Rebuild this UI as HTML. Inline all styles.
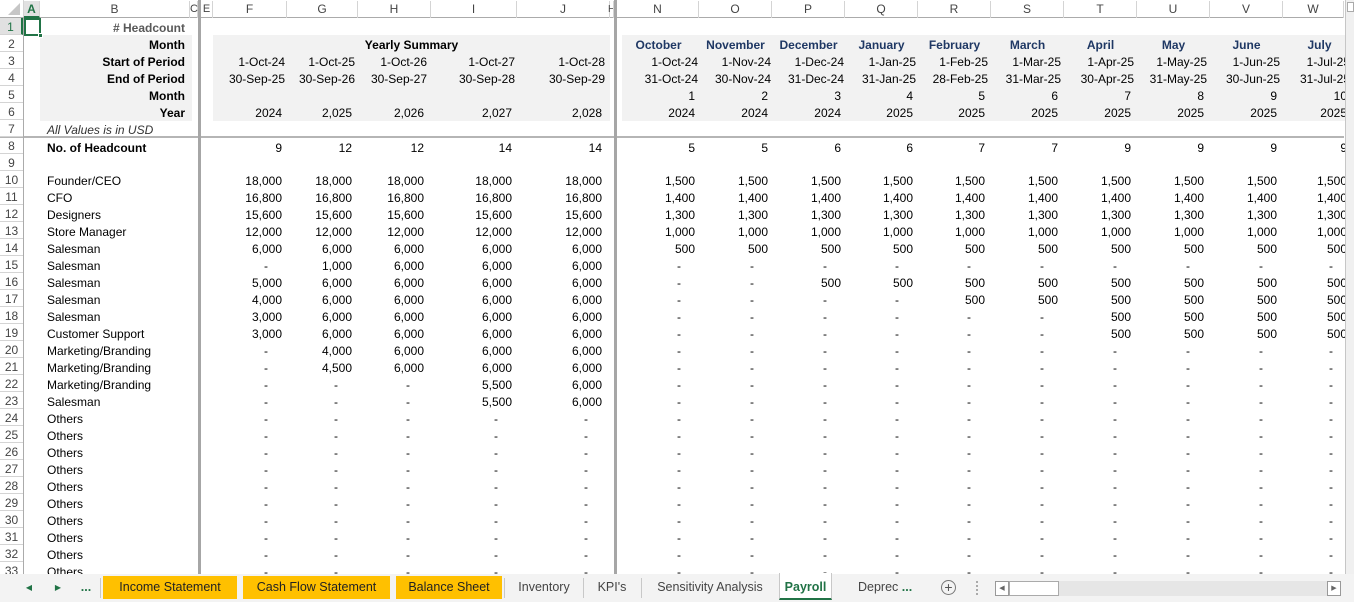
<!DOCTYPE html>
<html><head><meta charset="utf-8"><style>
*{margin:0;padding:0;box-sizing:border-box}
body{width:1354px;height:602px;overflow:hidden;background:#fff;font-family:"Liberation Sans",Arial,sans-serif;font-size:12px;color:#000;position:relative}
.hdr{position:absolute;top:0;left:0;width:1344px;height:18px;border-bottom:1px solid #ababab;background:#fff}
.hdr span{position:absolute;top:1px;height:17px;line-height:17px;text-align:center;color:#444;border-right:1px solid #d4d4d4;font-size:12px}
.rh{position:absolute;left:0;top:18px;width:24px;height:556px;border-right:1px solid #ababab}
.rh span{position:absolute;left:0;width:23px;height:17px;line-height:19px;text-align:center;color:#444;border-bottom:1px solid #d4d4d4;font-size:12px}
#g{position:absolute;left:0;top:0;width:1345px;height:574px;overflow:hidden}
.fill{position:absolute;background:#f2f2f2}
.r{position:absolute;left:0;width:1400px;height:17px}
.r span{position:absolute;top:2px;height:17px;line-height:17px;white-space:nowrap;text-align:right}
.b{left:40px;width:150px;text-align:left!important;padding-left:7px}
.bl{left:40px;width:145px;font-weight:bold;text-align:right!important;color:#000}
.F{left:150px;width:132px}.G{left:287px;width:65px}.H{left:358px;width:66px}.I{left:431px;width:81px}.J{left:517px;width:85px}
.N{left:618px;width:77px}.O{left:699px;width:69px}.P{left:772px;width:69px}.Q{left:845px;width:68px}.R{left:918px;width:67px}.S{left:991px;width:67px}.T{left:1064px;width:67px}.U{left:1137px;width:67px}.V{left:1210px;width:67px}.W{left:1283px;width:64px}
.r span.d{padding-right:14px}
.dt span{transform:translateX(3px)}
.mo span{text-align:center;font-weight:bold;color:#1f3864}
.vl{position:absolute;top:0;width:3px;height:574px;background:#a6a6a6}
.tabs{position:absolute;left:0;top:574px;width:1354px;height:28px;background:#f3f3f3}
.tab{position:absolute;top:2px;height:23px;line-height:23px;text-align:center;font-size:12.5px;color:#444}
.y{background:#ffc000;color:#222}
.sep{position:absolute;top:4px;width:1px;height:20px;background:#c8c8c8}
</style></head><body>
<div id="g">
<div class="fill" style="left:40px;top:35px;width:152px;height:86px"></div>
<div class="fill" style="left:213px;top:35px;width:397px;height:86px"></div>
<div class="fill" style="left:622px;top:35px;width:730px;height:86px"></div>
<div style="position:absolute;left:0;top:136px;width:1344px;height:2px;background:#b5b5b5"></div>

<div class="r" style="top:18px"><span class="bl" style="color:#595959">#&nbsp;Headcount</span></div>
<div class="r mo" style="top:35px"><span class="bl" style="color:#000">Month</span><span style="left:213px;width:397px;color:#000">Yearly Summary</span>
<span style="left:618px;width:81px">October</span><span style="left:699px;width:73px">November</span><span style="left:772px;width:73px">December</span><span style="left:845px;width:73px">January</span><span style="left:918px;width:73px">February</span><span style="left:991px;width:73px">March</span><span style="left:1064px;width:73px">April</span><span style="left:1137px;width:73px">May</span><span style="left:1210px;width:73px">June</span><span style="left:1283px;width:73px">July</span></div>
<div class="r dt" style="top:52px"><span class="bl" style="transform:none">Start of Period</span><span class="F">1-Oct-24</span><span class="G">1-Oct-25</span><span class="H">1-Oct-26</span><span class="I">1-Oct-27</span><span class="J">1-Oct-28</span><span class="N">1-Oct-24</span><span class="O">1-Nov-24</span><span class="P">1-Dec-24</span><span class="Q">1-Jan-25</span><span class="R">1-Feb-25</span><span class="S">1-Mar-25</span><span class="T">1-Apr-25</span><span class="U">1-May-25</span><span class="V">1-Jun-25</span><span class="W">1-Jul-25</span></div>
<div class="r dt" style="top:69px"><span class="bl" style="transform:none">End of Period</span><span class="F">30-Sep-25</span><span class="G">30-Sep-26</span><span class="H">30-Sep-27</span><span class="I">30-Sep-28</span><span class="J">30-Sep-29</span><span class="N">31-Oct-24</span><span class="O">30-Nov-24</span><span class="P">31-Dec-24</span><span class="Q">31-Jan-25</span><span class="R">28-Feb-25</span><span class="S">31-Mar-25</span><span class="T">30-Apr-25</span><span class="U">31-May-25</span><span class="V">30-Jun-25</span><span class="W">31-Jul-25</span></div>
<div class="r" style="top:86px"><span class="bl">Month</span><span class="N">1</span><span class="O">2</span><span class="P">3</span><span class="Q">4</span><span class="R">5</span><span class="S">6</span><span class="T">7</span><span class="U">8</span><span class="V">9</span><span class="W">10</span></div>
<div class="r" style="top:103px"><span class="bl">Year</span><span class="F">2024</span><span class="G">2,025</span><span class="H">2,026</span><span class="I">2,027</span><span class="J">2,028</span><span class="N">2024</span><span class="O">2024</span><span class="P">2024</span><span class="Q">2025</span><span class="R">2025</span><span class="S">2025</span><span class="T">2025</span><span class="U">2025</span><span class="V">2025</span><span class="W">2025</span></div>
<div class="r" style="top:120px"><span class="b" style="font-style:italic;color:#333">All Values is in USD</span></div>
<div class="r" style="top:138px"><span class="b" style="font-weight:bold">No. of Headcount</span><span class="F">9</span><span class="G">12</span><span class="H">12</span><span class="I">14</span><span class="J">14</span><span class="N">5</span><span class="O">5</span><span class="P">6</span><span class="Q">6</span><span class="R">7</span><span class="S">7</span><span class="T">9</span><span class="U">9</span><span class="V">9</span><span class="W">9</span></div>

<div class="r" style="top:171px"><span class="b">Founder/CEO</span><span class="F">18,000</span><span class="G">18,000</span><span class="H">18,000</span><span class="I">18,000</span><span class="J">18,000</span><span class="N">1,500</span><span class="O">1,500</span><span class="P">1,500</span><span class="Q">1,500</span><span class="R">1,500</span><span class="S">1,500</span><span class="T">1,500</span><span class="U">1,500</span><span class="V">1,500</span><span class="W">1,500</span></div>
<div class="r" style="top:188px"><span class="b">CFO</span><span class="F">16,800</span><span class="G">16,800</span><span class="H">16,800</span><span class="I">16,800</span><span class="J">16,800</span><span class="N">1,400</span><span class="O">1,400</span><span class="P">1,400</span><span class="Q">1,400</span><span class="R">1,400</span><span class="S">1,400</span><span class="T">1,400</span><span class="U">1,400</span><span class="V">1,400</span><span class="W">1,400</span></div>
<div class="r" style="top:205px"><span class="b">Designers</span><span class="F">15,600</span><span class="G">15,600</span><span class="H">15,600</span><span class="I">15,600</span><span class="J">15,600</span><span class="N">1,300</span><span class="O">1,300</span><span class="P">1,300</span><span class="Q">1,300</span><span class="R">1,300</span><span class="S">1,300</span><span class="T">1,300</span><span class="U">1,300</span><span class="V">1,300</span><span class="W">1,300</span></div>
<div class="r" style="top:222px"><span class="b">Store Manager</span><span class="F">12,000</span><span class="G">12,000</span><span class="H">12,000</span><span class="I">12,000</span><span class="J">12,000</span><span class="N">1,000</span><span class="O">1,000</span><span class="P">1,000</span><span class="Q">1,000</span><span class="R">1,000</span><span class="S">1,000</span><span class="T">1,000</span><span class="U">1,000</span><span class="V">1,000</span><span class="W">1,000</span></div>
<div class="r" style="top:239px"><span class="b">Salesman</span><span class="F">6,000</span><span class="G">6,000</span><span class="H">6,000</span><span class="I">6,000</span><span class="J">6,000</span><span class="N">500</span><span class="O">500</span><span class="P">500</span><span class="Q">500</span><span class="R">500</span><span class="S">500</span><span class="T">500</span><span class="U">500</span><span class="V">500</span><span class="W">500</span></div>
<div class="r" style="top:256px"><span class="b">Salesman</span><span class="F d">-</span><span class="G">1,000</span><span class="H">6,000</span><span class="I">6,000</span><span class="J">6,000</span><span class="N d">-</span><span class="O d">-</span><span class="P d">-</span><span class="Q d">-</span><span class="R d">-</span><span class="S d">-</span><span class="T d">-</span><span class="U d">-</span><span class="V d">-</span><span class="W d">-</span></div>
<div class="r" style="top:273px"><span class="b">Salesman</span><span class="F">5,000</span><span class="G">6,000</span><span class="H">6,000</span><span class="I">6,000</span><span class="J">6,000</span><span class="N d">-</span><span class="O d">-</span><span class="P">500</span><span class="Q">500</span><span class="R">500</span><span class="S">500</span><span class="T">500</span><span class="U">500</span><span class="V">500</span><span class="W">500</span></div>
<div class="r" style="top:290px"><span class="b">Salesman</span><span class="F">4,000</span><span class="G">6,000</span><span class="H">6,000</span><span class="I">6,000</span><span class="J">6,000</span><span class="N d">-</span><span class="O d">-</span><span class="P d">-</span><span class="Q d">-</span><span class="R">500</span><span class="S">500</span><span class="T">500</span><span class="U">500</span><span class="V">500</span><span class="W">500</span></div>
<div class="r" style="top:307px"><span class="b">Salesman</span><span class="F">3,000</span><span class="G">6,000</span><span class="H">6,000</span><span class="I">6,000</span><span class="J">6,000</span><span class="N d">-</span><span class="O d">-</span><span class="P d">-</span><span class="Q d">-</span><span class="R d">-</span><span class="S d">-</span><span class="T">500</span><span class="U">500</span><span class="V">500</span><span class="W">500</span></div>
<div class="r" style="top:324px"><span class="b">Customer Support</span><span class="F">3,000</span><span class="G">6,000</span><span class="H">6,000</span><span class="I">6,000</span><span class="J">6,000</span><span class="N d">-</span><span class="O d">-</span><span class="P d">-</span><span class="Q d">-</span><span class="R d">-</span><span class="S d">-</span><span class="T">500</span><span class="U">500</span><span class="V">500</span><span class="W">500</span></div>
<div class="r" style="top:341px"><span class="b">Marketing/Branding</span><span class="F d">-</span><span class="G">4,000</span><span class="H">6,000</span><span class="I">6,000</span><span class="J">6,000</span><span class="N d">-</span><span class="O d">-</span><span class="P d">-</span><span class="Q d">-</span><span class="R d">-</span><span class="S d">-</span><span class="T d">-</span><span class="U d">-</span><span class="V d">-</span><span class="W d">-</span></div>
<div class="r" style="top:358px"><span class="b">Marketing/Branding</span><span class="F d">-</span><span class="G">4,500</span><span class="H">6,000</span><span class="I">6,000</span><span class="J">6,000</span><span class="N d">-</span><span class="O d">-</span><span class="P d">-</span><span class="Q d">-</span><span class="R d">-</span><span class="S d">-</span><span class="T d">-</span><span class="U d">-</span><span class="V d">-</span><span class="W d">-</span></div>
<div class="r" style="top:375px"><span class="b">Marketing/Branding</span><span class="F d">-</span><span class="G d">-</span><span class="H d">-</span><span class="I">5,500</span><span class="J">6,000</span><span class="N d">-</span><span class="O d">-</span><span class="P d">-</span><span class="Q d">-</span><span class="R d">-</span><span class="S d">-</span><span class="T d">-</span><span class="U d">-</span><span class="V d">-</span><span class="W d">-</span></div>
<div class="r" style="top:392px"><span class="b">Salesman</span><span class="F d">-</span><span class="G d">-</span><span class="H d">-</span><span class="I">5,500</span><span class="J">6,000</span><span class="N d">-</span><span class="O d">-</span><span class="P d">-</span><span class="Q d">-</span><span class="R d">-</span><span class="S d">-</span><span class="T d">-</span><span class="U d">-</span><span class="V d">-</span><span class="W d">-</span></div>
<div class="r" style="top:409px"><span class="b">Others</span><span class="F d">-</span><span class="G d">-</span><span class="H d">-</span><span class="I d">-</span><span class="J d">-</span><span class="N d">-</span><span class="O d">-</span><span class="P d">-</span><span class="Q d">-</span><span class="R d">-</span><span class="S d">-</span><span class="T d">-</span><span class="U d">-</span><span class="V d">-</span><span class="W d">-</span></div>
<div class="r" style="top:426px"><span class="b">Others</span><span class="F d">-</span><span class="G d">-</span><span class="H d">-</span><span class="I d">-</span><span class="J d">-</span><span class="N d">-</span><span class="O d">-</span><span class="P d">-</span><span class="Q d">-</span><span class="R d">-</span><span class="S d">-</span><span class="T d">-</span><span class="U d">-</span><span class="V d">-</span><span class="W d">-</span></div>
<div class="r" style="top:443px"><span class="b">Others</span><span class="F d">-</span><span class="G d">-</span><span class="H d">-</span><span class="I d">-</span><span class="J d">-</span><span class="N d">-</span><span class="O d">-</span><span class="P d">-</span><span class="Q d">-</span><span class="R d">-</span><span class="S d">-</span><span class="T d">-</span><span class="U d">-</span><span class="V d">-</span><span class="W d">-</span></div>
<div class="r" style="top:460px"><span class="b">Others</span><span class="F d">-</span><span class="G d">-</span><span class="H d">-</span><span class="I d">-</span><span class="J d">-</span><span class="N d">-</span><span class="O d">-</span><span class="P d">-</span><span class="Q d">-</span><span class="R d">-</span><span class="S d">-</span><span class="T d">-</span><span class="U d">-</span><span class="V d">-</span><span class="W d">-</span></div>
<div class="r" style="top:477px"><span class="b">Others</span><span class="F d">-</span><span class="G d">-</span><span class="H d">-</span><span class="I d">-</span><span class="J d">-</span><span class="N d">-</span><span class="O d">-</span><span class="P d">-</span><span class="Q d">-</span><span class="R d">-</span><span class="S d">-</span><span class="T d">-</span><span class="U d">-</span><span class="V d">-</span><span class="W d">-</span></div>
<div class="r" style="top:494px"><span class="b">Others</span><span class="F d">-</span><span class="G d">-</span><span class="H d">-</span><span class="I d">-</span><span class="J d">-</span><span class="N d">-</span><span class="O d">-</span><span class="P d">-</span><span class="Q d">-</span><span class="R d">-</span><span class="S d">-</span><span class="T d">-</span><span class="U d">-</span><span class="V d">-</span><span class="W d">-</span></div>
<div class="r" style="top:511px"><span class="b">Others</span><span class="F d">-</span><span class="G d">-</span><span class="H d">-</span><span class="I d">-</span><span class="J d">-</span><span class="N d">-</span><span class="O d">-</span><span class="P d">-</span><span class="Q d">-</span><span class="R d">-</span><span class="S d">-</span><span class="T d">-</span><span class="U d">-</span><span class="V d">-</span><span class="W d">-</span></div>
<div class="r" style="top:528px"><span class="b">Others</span><span class="F d">-</span><span class="G d">-</span><span class="H d">-</span><span class="I d">-</span><span class="J d">-</span><span class="N d">-</span><span class="O d">-</span><span class="P d">-</span><span class="Q d">-</span><span class="R d">-</span><span class="S d">-</span><span class="T d">-</span><span class="U d">-</span><span class="V d">-</span><span class="W d">-</span></div>
<div class="r" style="top:545px"><span class="b">Others</span><span class="F d">-</span><span class="G d">-</span><span class="H d">-</span><span class="I d">-</span><span class="J d">-</span><span class="N d">-</span><span class="O d">-</span><span class="P d">-</span><span class="Q d">-</span><span class="R d">-</span><span class="S d">-</span><span class="T d">-</span><span class="U d">-</span><span class="V d">-</span><span class="W d">-</span></div>
<div class="r" style="top:562px"><span class="b">Others</span><span class="F d">-</span><span class="G d">-</span><span class="H d">-</span><span class="I d">-</span><span class="J d">-</span><span class="N d">-</span><span class="O d">-</span><span class="P d">-</span><span class="Q d">-</span><span class="R d">-</span><span class="S d">-</span><span class="T d">-</span><span class="U d">-</span><span class="V d">-</span><span class="W d">-</span></div>

<div class="vl" style="left:198px"></div>
<div class="vl" style="left:614px"></div>
</div>

<div class="hdr">
<span style="left:0;width:24px;background:#fff;top:0"><svg width="24" height="17"><polygon points="20,3 20,15 8,15" fill="#c6c6c6"/></svg></span>
<span style="left:24px;width:16px;background:#e1e1e1;color:#217346;font-weight:bold;border-bottom:2px solid #217346">A</span>
<span style="left:40px;width:150px">B</span>
<span style="left:190px;width:8px;font-size:11px">C</span>
<span style="left:201px;width:12px;font-size:11px">E</span>
<span style="left:213px;width:74px">F</span><span style="left:287px;width:71px">G</span><span style="left:358px;width:73px">H</span><span style="left:431px;width:86px">I</span><span style="left:517px;width:93px">J</span>
<span style="left:608px;width:6px;font-size:10px;overflow:hidden">H</span>
<span style="left:617px;width:82px">N</span><span style="left:699px;width:73px">O</span><span style="left:772px;width:73px">P</span><span style="left:845px;width:73px">Q</span><span style="left:918px;width:73px">R</span><span style="left:991px;width:73px">S</span><span style="left:1064px;width:73px">T</span><span style="left:1137px;width:73px">U</span><span style="left:1210px;width:73px">V</span><span style="left:1283px;width:61px">W</span>
</div>
<div style="position:absolute;left:198px;top:0;width:3px;height:18px;background:#a6a6a6"></div>
<div style="position:absolute;left:614px;top:0;width:3px;height:18px;background:#a6a6a6"></div>

<div class="rh">
<span style="top:0;background:#e1e1e1;color:#217346;border-right:2px solid #217346">1</span>
<span style="top:17px">2</span><span style="top:34px">3</span><span style="top:51px">4</span><span style="top:68px">5</span><span style="top:85px">6</span><span style="top:102px">7</span><span style="top:119px">8</span><span style="top:136px">9</span><span style="top:153px">10</span><span style="top:170px">11</span><span style="top:187px">12</span><span style="top:204px">13</span><span style="top:221px">14</span><span style="top:238px">15</span><span style="top:255px">16</span><span style="top:272px">17</span><span style="top:289px">18</span><span style="top:306px">19</span><span style="top:323px">20</span><span style="top:340px">21</span><span style="top:357px">22</span><span style="top:374px">23</span><span style="top:391px">24</span><span style="top:408px">25</span><span style="top:425px">26</span><span style="top:442px">27</span><span style="top:459px">28</span><span style="top:476px">29</span><span style="top:493px">30</span><span style="top:510px">31</span><span style="top:527px">32</span><span style="top:544px">33</span>
</div>
<div style="position:absolute;left:24px;top:18px;width:17px;height:18px;border:2px solid #217346"></div>
<div style="position:absolute;left:38px;top:33px;width:5px;height:5px;background:#217346;border:1px solid #fff"></div>

<div style="position:absolute;left:1345px;top:0;width:9px;height:574px;background:#f0f0f0;border-left:1px solid #c6c6c6"></div>
<div style="position:absolute;left:1347px;top:2px;width:7px;height:10px;border:1px solid #aaa;background:#fff"></div>

<div class="tabs">
<div class="tab" style="left:22px;width:14px;color:#217346;font-size:8px">&#9664;</div>
<div class="tab" style="left:51px;width:14px;color:#217346;font-size:8px">&#9654;</div>
<div class="tab" style="left:78px;width:16px;color:#217346;font-weight:bold">...</div>
<div class="sep" style="left:100px"></div>
<div class="tab y" style="left:103px;width:134px">Income Statement</div>
<div class="tab y" style="left:243px;width:147px">Cash Flow Statement</div>
<div class="tab y" style="left:396px;width:106px">Balance Sheet</div>
<div class="sep" style="left:504px"></div>
<div class="tab" style="left:506px;width:76px">Inventory</div>
<div class="sep" style="left:583px"></div>
<div class="tab" style="left:584px;width:56px">KPI's</div>
<div class="sep" style="left:641px"></div>
<div class="tab" style="left:642px;width:136px">Sensitivity Analysis</div>
<div style="position:absolute;left:779px;top:-1px;width:53px;height:27px;background:#fff;border-left:1px solid #c8c8c8;border-right:1px solid #c8c8c8;border-bottom:2px solid #217346"></div>
<div class="tab" style="left:779px;width:53px;color:#217346;font-weight:bold">Payroll</div>
<div class="tab" style="left:858px;width:60px;text-align:left">Deprec <b style="color:#217346">...</b></div>
<div style="position:absolute;left:941px;top:6px;width:15px;height:15px;border:1px solid #777;border-radius:50%;text-align:center;line-height:13px;color:#555;font-size:14px">+</div>
<div style="position:absolute;left:976px;top:7px;width:2px;height:14px;border-left:2px dotted #aaa"></div>
<div style="position:absolute;left:995px;top:7px;width:346px;height:15px;background:#e6e6e6"></div>
<div style="position:absolute;left:995px;top:7px;width:14px;height:15px;border:1px solid #999;background:#fff;font-size:7px;line-height:13px;text-align:center;color:#666">&#9664;</div>
<div style="position:absolute;left:1009px;top:7px;width:50px;height:15px;border:1px solid #aaa;background:#fff"></div>
<div style="position:absolute;left:1327px;top:7px;width:14px;height:15px;border:1px solid #999;background:#fff;font-size:7px;line-height:13px;text-align:center;color:#666">&#9654;</div>
</div>
</body></html>
